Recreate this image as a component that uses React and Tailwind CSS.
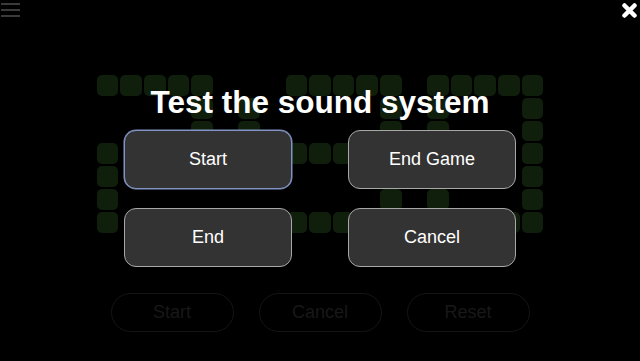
import React from 'react'

const board = [
  '#####...#####.#####',
  '....#.#.....#.#...#',
  '....#.#.....#.#...#',
  '#.....#######.#...#',
  '#...........#.#...#',
  '#...........#.#...#',
  '#.....#######....##',
]

function Board() {
  return (
    <div className="grid grid-cols-[repeat(19,21.6px)] grid-rows-[repeat(7,20.8px)] gap-[2px]">
      {board.flatMap((row, r) =>
        row.split('').map((c, i) => (
          <div
            key={r + '-' + i}
            className={c === '#' ? 'rounded-[5px] bg-[#0f1f0c]' : ''}
          />
        ))
      )}
    </div>
  )
}

function GameButton({ children }) {
  return (
    <button
      type="button"
      className="w-[123px] h-[39px] rounded-[20px] border border-[#151515] text-[18px] text-[#181818]"
    >
      {children}
    </button>
  )
}

function DialogButton({ children, focused }) {
  return (
    <button
      type="button"
      className={
        'h-[59px] rounded-[12px] bg-[#333333] text-white text-[18px] border ' +
        (focused ? 'border-[#8193c4] shadow-[0_0_0_0.5px_#8193c4]' : 'border-[#a8a8a8]')
      }
    >
      {children}
    </button>
  )
}

export default function App() {
  return (
    <div className="relative h-[361px] w-[640px] overflow-hidden bg-black font-['Liberation_Sans',Arial,sans-serif]">
      {/* game underneath */}
      <div className="flex flex-col">
        <div className="pt-[3px] pl-[1px] flex flex-col gap-[4px]">
          <div className="w-[19px] h-[2px] bg-[#3a3a3a]" />
          <div className="w-[19px] h-[2px] bg-[#3a3a3a]" />
          <div className="w-[19px] h-[2px] bg-[#3a3a3a]" />
        </div>
        <div className="mt-[58px] flex justify-center">
          <Board />
        </div>
        <div className="mt-[60px] flex justify-center gap-[25px]">
          <GameButton>Start</GameButton>
          <GameButton>Cancel</GameButton>
          <GameButton>Reset</GameButton>
        </div>
      </div>

      {/* sound test dialog */}
      <div className="absolute inset-0 flex flex-col items-center pt-[87px]">
        <button type="button" className="absolute top-[3px] right-[3px] w-[15px] h-[15px]">
          <svg viewBox="0 0 15 15" width="15" height="15">
            <path d="M2.5 2.5 L12.5 12.5 M12.5 2.5 L2.5 12.5" stroke="white" strokeWidth="4.5" strokeLinecap="round" />
          </svg>
        </button>
        <h1 className="text-white font-bold text-[31.5px] leading-[31px]">Test the sound system</h1>
        <div className="mt-[12px] grid grid-cols-[168px_168px] gap-x-[56px] gap-y-[19px]">
          <DialogButton focused>Start</DialogButton>
          <DialogButton>End Game</DialogButton>
          <DialogButton>End</DialogButton>
          <DialogButton>Cancel</DialogButton>
        </div>
      </div>
    </div>
  )
}
